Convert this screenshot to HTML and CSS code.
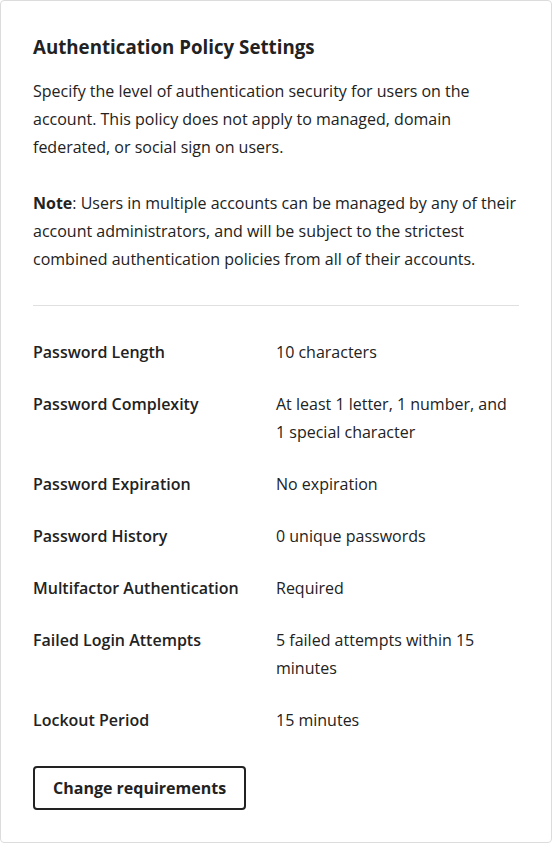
FILE: index.html
```html
<!DOCTYPE html>
<html lang="en">
<head>
<meta charset="utf-8">
<link rel="stylesheet" href="styles.css">
</head>
<body>
<section class="card">
  <h2 class="title">Authentication Policy Settings</h2>
  <p class="desc">Specify the level of authentication security for users on the account. This policy does not apply to managed, domain federated, or social sign on users.</p>
  <p class="desc note"><strong>Note</strong>: Users in multiple accounts can be managed by any of their account administrators, and will be subject to the strictest combined authentication policies from all of their accounts.</p>
  <hr class="divider">
  <dl class="policy">
    <dt>Password Length</dt><dd>10 characters</dd>
    <dt>Password Complexity</dt><dd>At least 1 letter, 1 number, and 1 special character</dd>
    <dt>Password Expiration</dt><dd>No expiration</dd>
    <dt>Password History</dt><dd>0 unique passwords</dd>
    <dt>Multifactor Authentication</dt><dd>Required</dd>
    <dt>Failed Login Attempts</dt><dd>5 failed attempts within 15 minutes</dd>
    <dt>Lockout Period</dt><dd>15 minutes</dd>
  </dl>
  <button class="btn" type="button">Change requirements</button>
</section>
</body>
</html>
```
FILE: styles.css
```css
html, body {
  margin: 0;
  padding: 0;
  background: #fff;
}
body {
  font-family: "Open Sans", "Noto Sans", sans-serif;
  color: #222;
  font-size: 16px;
  line-height: 28px;
}
.card {
  box-sizing: border-box;
  width: 552px;
  height: 843px;
  border: 1px solid #dcdcdc;
  border-radius: 4px;
  padding: 32px;
}
.title {
  margin: 0 0 16px;
  font-size: 18.72px;
  line-height: 28px;
  font-weight: 700;
}
.desc {
  margin: 0;
}
.note {
  margin-top: 28px;
}
.divider {
  border: 0;
  border-top: 1px solid #e0e0e0;
  margin: 32px 0;
  height: 0;
}
.policy {
  display: grid;
  grid-template-columns: 1fr 1fr;
  row-gap: 24px;
  margin: 0 0 32px;
}
.policy dt {
  font-weight: 600;
  margin: 0;
}
.policy dd {
  margin: 0;
}
.btn {
  box-sizing: border-box;
  height: 44px;
  padding: 0 18px;
  border: 2px solid #222;
  border-radius: 4px;
  background: #fff;
  color: #222;
  font-family: inherit;
  font-size: 16px;
  font-weight: 700;
  line-height: 28px;
}
```
